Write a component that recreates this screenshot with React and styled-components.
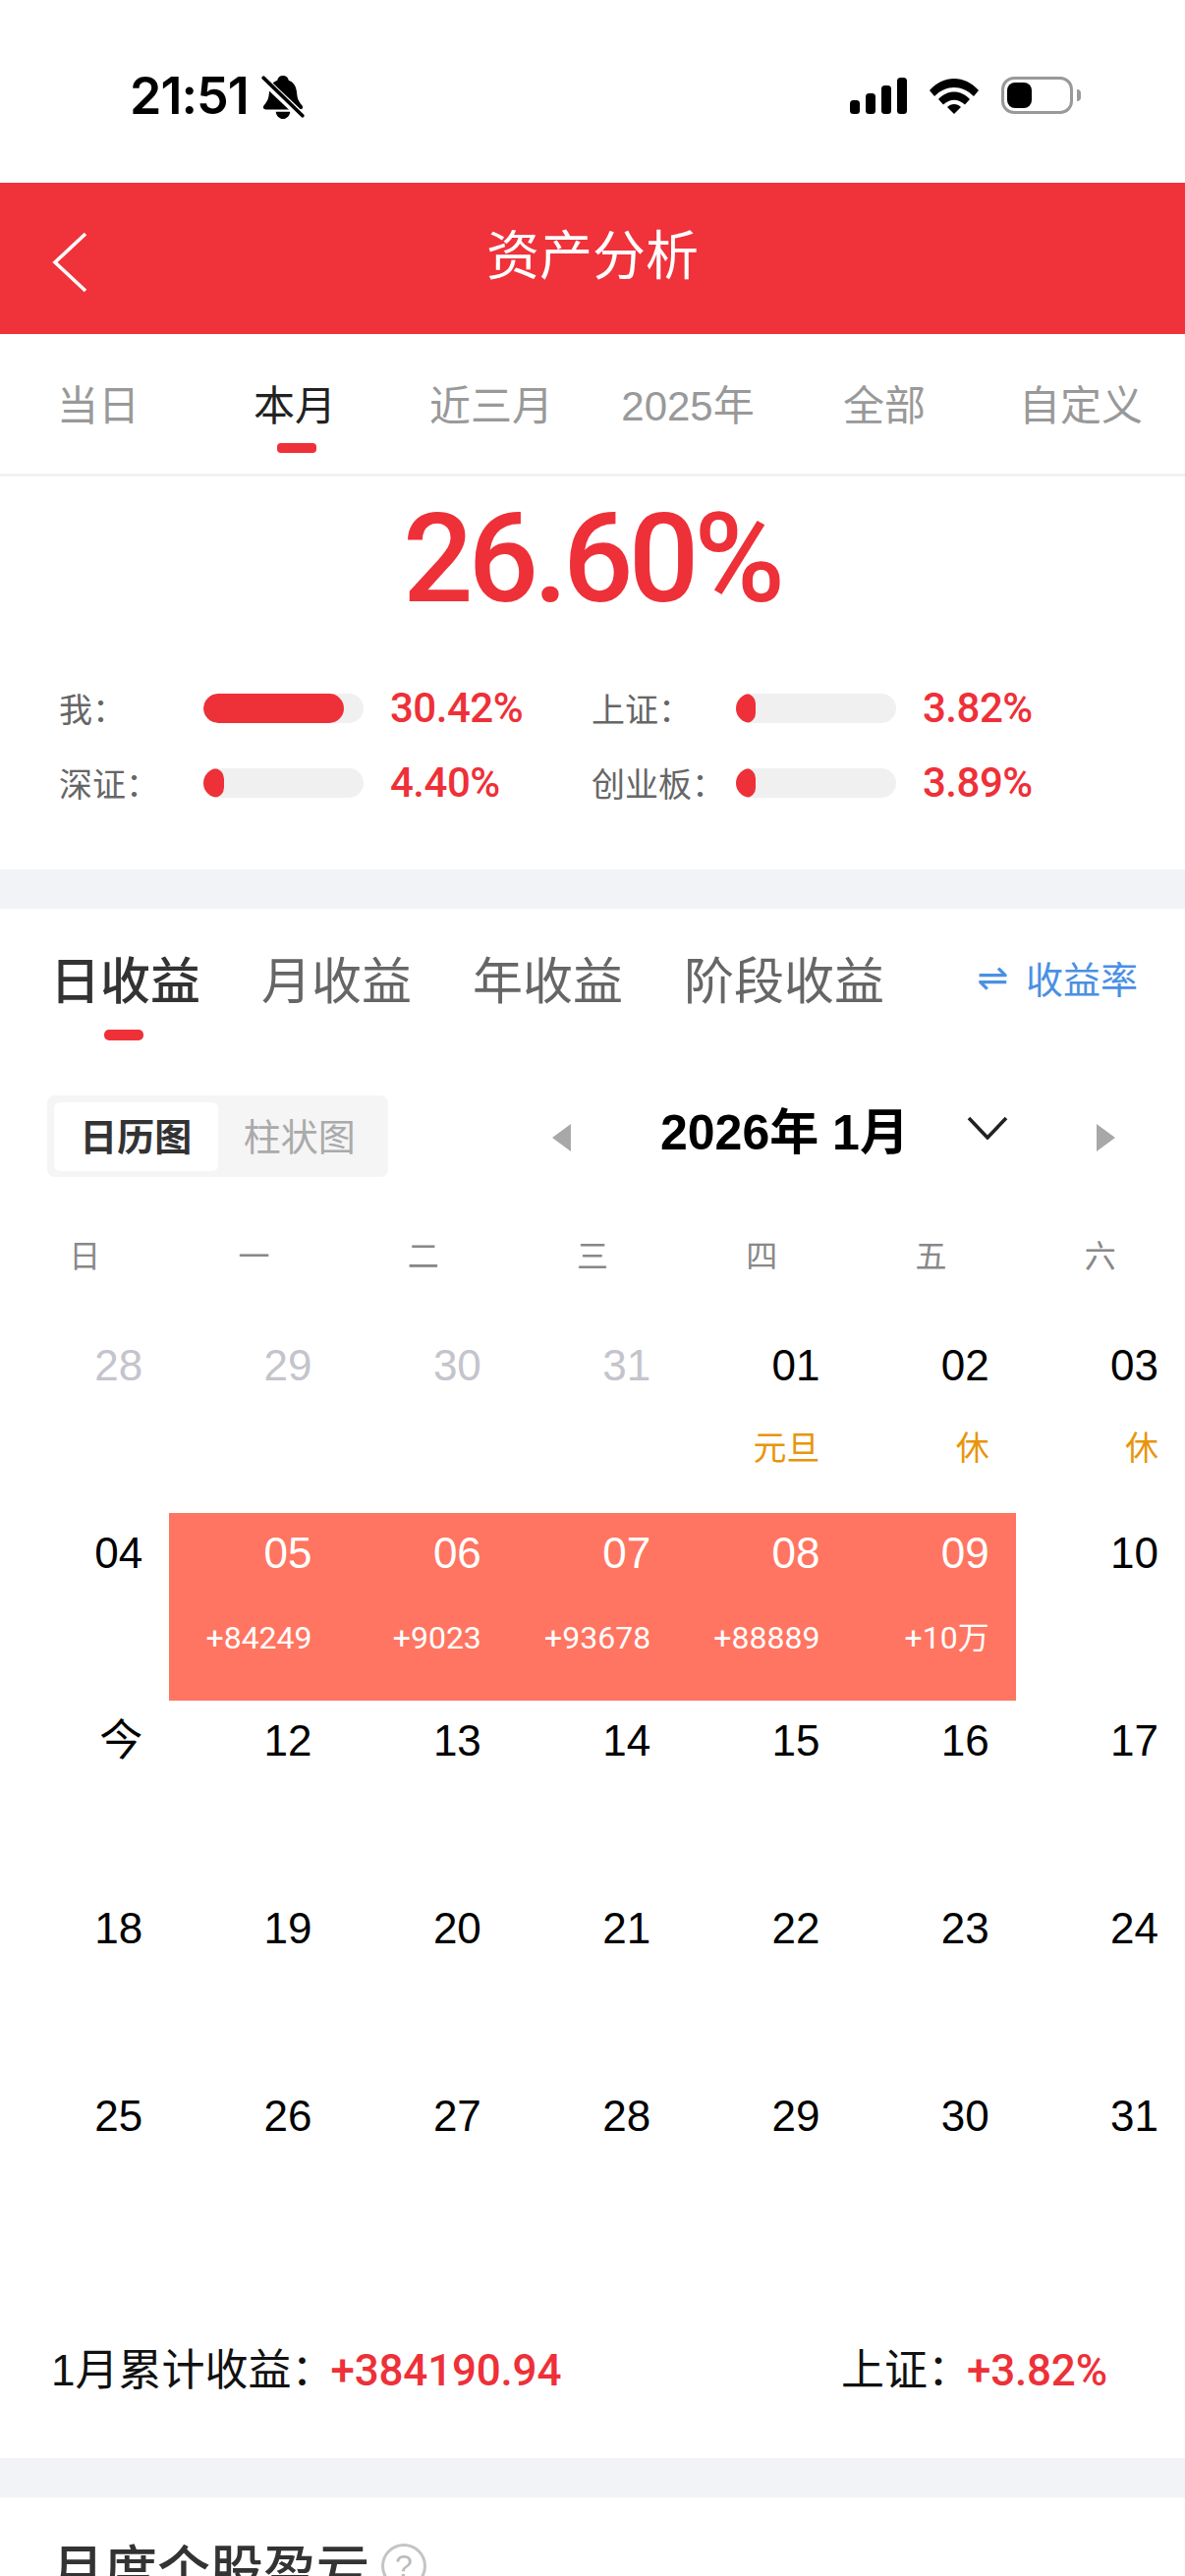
import React from 'react'
import styled, { createGlobalStyle } from 'styled-components'

const GlobalStyle = createGlobalStyle`
  html, body {
    margin: 0;
    padding: 0;
    background: #fff;
  }
  body {
    width: 1206px;
    height: 2622px;
    overflow: hidden;
    font-family: "Liberation Sans", "Noto Sans CJK SC", sans-serif;
  }
  * { box-sizing: border-box; }
`

const RED = '#ee3038'

const topTabs = ['当日', '本月', '近三月', '2025年', '全部', '自定义']
const incomeTabs = ['日收益', '月收益', '年收益', '阶段收益']
const weekdays = ['日', '一', '二', '三', '四', '五', '六']
const stats = [
  { label: '我：', pct: 88, value: '30.42%' },
  { label: '上证：', pct: 12, value: '3.82%' },
  { label: '深证：', pct: 13, value: '4.40%' },
  { label: '创业板：', pct: 12, value: '3.89%' },
]
const days = [
  { n: '28', off: true }, { n: '29', off: true }, { n: '30', off: true }, { n: '31', off: true },
  { n: '01', tag: '元旦' }, { n: '02', tag: '休' }, { n: '03', tag: '休' },
  { n: '04' }, { n: '05', gain: '+84249' }, { n: '06', gain: '+9023' }, { n: '07', gain: '+93678' },
  { n: '08', gain: '+88889' }, { n: '09', gain: '+10万' }, { n: '10' },
  { n: '今' }, { n: '12' }, { n: '13' }, { n: '14' }, { n: '15' }, { n: '16' }, { n: '17' },
  { n: '18' }, { n: '19' }, { n: '20' }, { n: '21' }, { n: '22' }, { n: '23' }, { n: '24' },
  { n: '25' }, { n: '26' }, { n: '27' }, { n: '28' }, { n: '29' }, { n: '30' }, { n: '31' },
]

const App = () => {
  return (
    <Page>
      <GlobalStyle />
      <StatusBar>
        <Clock>21:51</Clock>
        <BellIcon />
        <StatusIcons>
          <SignalIcon />
          <WifiIcon />
          <Battery><BatteryFill /></Battery>
          <BatteryNub />
        </StatusIcons>
      </StatusBar>

      <Header>
        <BackButton>
          <svg width="40" height="62" viewBox="0 0 40 62" fill="none">
            <path d="M35 2 L4 31 L35 60" stroke="#fff" strokeWidth="3.6" />
          </svg>
        </BackButton>
        <HeaderTitle>资产分析</HeaderTitle>
      </Header>

      <TopTabs>
        {topTabs.map((t, i) => (
          <TopTab key={t} $active={i === 1}>{t}</TopTab>
        ))}
      </TopTabs>

      <Summary>
        <BigNumber>26.60%</BigNumber>
        <StatGrid>
          {stats.map((s) => (
            <Stat key={s.label}>
              <StatLabel>{s.label}</StatLabel>
              <Track><Fill $pct={s.pct} /></Track>
              <StatValue>{s.value}</StatValue>
            </Stat>
          ))}
        </StatGrid>
      </Summary>

      <Band />

      <IncomeTabs>
        {incomeTabs.map((t, i) => (
          <IncomeTab key={t} $active={i === 0}>{t}</IncomeTab>
        ))}
        <RateLink><SwapGlyph>⇌</SwapGlyph>收益率</RateLink>
      </IncomeTabs>

      <Toolbar>
        <Segment>
          <SegmentItem $active>日历图</SegmentItem>
          <SegmentItem>柱状图</SegmentItem>
        </Segment>
        <MonthPicker>
          <svg width="21" height="28" viewBox="0 0 21 28"><path d="M20 0 V28 L1 14 Z" fill="#a8a8a8" /></svg>
          <MonthTitle>2026年 1月</MonthTitle>
          <ChevronBox>
            <svg width="42" height="24" viewBox="0 0 42 24" fill="none">
              <path d="M2 2 L21 22 L40 2" stroke="#222" strokeWidth="3.6" />
            </svg>
          </ChevronBox>
          <svg width="21" height="28" viewBox="0 0 21 28"><path d="M1 0 V28 L20 14 Z" fill="#a8a8a8" /></svg>
        </MonthPicker>
      </Toolbar>

      <Weekdays>
        {weekdays.map((d) => <Weekday key={d}>{d}</Weekday>)}
      </Weekdays>

      <Calendar>
        {days.map((d, i) => (
          <DayCell key={i} $hot={!!d.gain}>
            <DayNum $off={d.off} $hot={!!d.gain}>{d.n}</DayNum>
            {d.tag && <DayTag>{d.tag}</DayTag>}
            {d.gain && <DayGain>{d.gain}</DayGain>}
          </DayCell>
        ))}
      </Calendar>

      <Totals>
        <TotalLeft>1月累计收益：<TotalValue>+384190.94</TotalValue></TotalLeft>
        <TotalRight>上证：<TotalValue>+3.82%</TotalValue></TotalRight>
      </Totals>

      <Band />

      <SectionTitle>
        月度个股盈亏
        <HelpIcon>?</HelpIcon>
      </SectionTitle>
    </Page>
  )
}

export default App

const BellIcon = () => (
  <BellWrap>
    <svg width="44" height="46" viewBox="0 0 42 44">
      <path
        d="M21 1c3 0 5 2 5.500 4.500C32 7.500 34 12 34.500 18c.4 5 1.500 8 5 12 1.500 2 .5 4-2 4H4.500c-2.500 0-3.500-2-2-4 3.500-4 4.600-7 5-12C8 12 10 7.500 15.500 5.500 16 3 18 1 21 1z"
        fill="#000"
      />
      <path d="M14 36h14c-.5 4-3.500 7-7 7s-6.500-3-7-7z" fill="#000" />
      <path d="M2 5 L40 41" stroke="#fff" strokeWidth="8" />
      <path d="M2 3 L40 40" stroke="#000" strokeWidth="3.400" strokeLinecap="round" />
    </svg>
  </BellWrap>
)

const SignalIcon = () => (
  <svg width="58" height="37" viewBox="0 0 58 37">
    <rect x="0" y="23" width="10" height="14" rx="3.500" fill="#000" />
    <rect x="16" y="16" width="10" height="21" rx="3.500" fill="#000" />
    <rect x="32" y="8" width="10" height="29" rx="3.500" fill="#000" />
    <rect x="48" y="0" width="10" height="37" rx="3.500" fill="#000" />
  </svg>
)

const WifiIcon = () => (
  <svg width="50" height="37" viewBox="0 0 50 37">
    <path d="M0 13 C14 -3 36 -3 50 13 L45 19 C33 7 17 7 5 19 Z" fill="#000" />
    <path d="M9 22 C18 12 32 12 41 22 L36 27.500 C29 21 21 21 14 27.500 Z" fill="#000" />
    <path d="M18 30 C22 26 28 26 32 30 L25 37 Z" fill="#000" />
  </svg>
)

const Page = styled.div`
  width: 1206px;
  height: 2622px;
  overflow: hidden;
  background: #fff;
`

const StatusBar = styled.div`
  height: 186px;
  padding: 76px 106px 0 132px;
  display: flex;
  align-items: flex-start;
`

const Clock = styled.div`
  font-family: Inter, sans-serif;
  font-weight: 600;
  font-size: 52px;
  line-height: 44px;
  letter-spacing: -1px;
  color: #000;
`

const BellWrap = styled.div`
  margin-left: 13px;
  height: 46px;
`

const StatusIcons = styled.div`
  margin-left: auto;
  margin-top: 2px;
  display: flex;
  align-items: center;
  height: 38px;
  svg + svg { margin-left: 23px; }
`

const Battery = styled.div`
  margin-left: 23px;
  width: 73px;
  height: 38px;
  border: 3px solid #999;
  border-radius: 13px;
  padding: 3px;
`

const BatteryFill = styled.div`
  width: 25px;
  height: 100%;
  background: #000;
  border-radius: 8px;
`

const BatteryNub = styled.div`
  width: 4px;
  height: 12px;
  margin-left: 4px;
  background: #999;
  border-radius: 0 4px 4px 0;
`

const Header = styled.div`
  position: relative;
  height: 154px;
  background: #f0323a;
  display: flex;
  align-items: center;
  justify-content: center;
`

const BackButton = styled.div`
  position: absolute;
  left: 52px;
  top: 50px;
`

const HeaderTitle = styled.div`
  font-family: "Noto Sans CJK SC", sans-serif;
  font-size: 54px;
  line-height: 60px;
  color: #fff;
  margin-top: -13px;
`

const TopTabs = styled.div`
  display: grid;
  grid-template-columns: repeat(6, 200px);
  height: 145px;
  border-bottom: 3px solid #f2f2f2;
`

const TopTab = styled.div`
  position: relative;
  padding-top: 49px;
  text-align: center;
  font-family: "Liberation Sans", "Noto Sans CJK SC", sans-serif;
  font-size: 42px;
  line-height: 50px;
  color: ${(p) => (p.$active ? '#222' : '#999')};
  ${(p) => p.$active && `
    &::after {
      content: '';
      position: absolute;
      left: 82px;
      top: 111px;
      width: 40px;
      height: 10px;
      border-radius: 4px;
      background: ${RED};
    }
  `}
`

const Summary = styled.div`
  height: 400px;
`

const BigNumber = styled.div`
  padding-top: 14px;
  height: 221px;
  text-align: center;
  font-family: Roboto, sans-serif;
  font-weight: 500;
  font-size: 126px;
  line-height: 140px;
  letter-spacing: -5px;
  color: ${RED};
  margin-left: -2px;
`

const StatGrid = styled.div`
  padding-left: 60px;
  display: grid;
  grid-template-columns: 542px 1fr;
  row-gap: 46px;
`

const Stat = styled.div`
  display: flex;
  align-items: center;
  height: 30px;
`

const StatLabel = styled.div`
  width: 147px;
  font-family: "Noto Sans CJK SC", sans-serif;
  font-size: 34px;
  line-height: 40px;
  color: #666;
  white-space: nowrap;
`

const Track = styled.div`
  width: 163px;
  height: 30px;
  border-radius: 15px;
  background: #f0f0f0;
  overflow: hidden;
`

const Fill = styled.div`
  width: ${(p) => p.$pct}%;
  height: 100%;
  border-radius: 15px;
  background: ${RED};
`

const StatValue = styled.div`
  margin-left: 27px;
  font-family: Roboto, sans-serif;
  font-weight: 500;
  font-size: 42px;
  line-height: 40px;
  letter-spacing: -0.500px;
  color: ${RED};
`

const Band = styled.div`
  height: 40px;
  background: #f2f3f7;
`

const IncomeTabs = styled.div`
  height: 190px;
  padding: 40px 48px 0 51px;
  display: flex;
  align-items: flex-start;
  gap: 62px;
`

const IncomeTab = styled.div`
  position: relative;
  font-family: "Noto Sans CJK SC", sans-serif;
  font-size: 51px;
  line-height: 60px;
  font-weight: ${(p) => (p.$active ? 500 : 400)};
  color: ${(p) => (p.$active ? '#333' : '#666')};
  ${(p) => p.$active && `
    &::after {
      content: '';
      position: absolute;
      left: 55px;
      top: 83px;
      width: 40px;
      height: 11px;
      border-radius: 5px;
      background: ${RED};
    }
  `}
`

const RateLink = styled.div`
  margin-left: auto;
  font-family: "Noto Sans CJK SC", sans-serif;
  font-size: 38px;
  line-height: 60px;
  color: #4a90e2;
  display: flex;
  align-items: center;
`

const SwapGlyph = styled.span`
  font-family: "DejaVu Sans", sans-serif;
  font-size: 38px;
  margin-right: 18px;
  margin-left: -3px;
`

const Toolbar = styled.div`
  height: 138px;
  padding-left: 48px;
  display: flex;
  align-items: flex-start;
`

const Segment = styled.div`
  width: 347px;
  height: 83px;
  padding: 7px;
  background: #f5f5f5;
  border-radius: 8px;
  display: flex;
`

const SegmentItem = styled.div`
  width: 167px;
  height: 70px;
  border-radius: 6px;
  background: ${(p) => (p.$active ? '#fff' : 'transparent')};
  font-family: "Noto Sans CJK SC", sans-serif;
  font-size: 38px;
  font-weight: ${(p) => (p.$active ? 700 : 400)};
  line-height: 66px;
  text-align: center;
  color: ${(p) => (p.$active ? '#333' : '#aaa')};
`

const MonthPicker = styled.div`
  margin-left: 166px;
  width: 575px;
  height: 83px;
  display: flex;
  align-items: center;
  padding-top: 2px;
`

const MonthTitle = styled.div`
  margin-left: 90px;
  width: 313px;
  font-family: "Liberation Sans", "Noto Sans CJK SC", sans-serif;
  font-weight: 700;
  font-size: 50px;
  line-height: 60px;
  color: #000;
  margin-top: -10px;
`

const ChevronBox = styled.div`
  width: 131px;
  height: 24px;
  margin-top: -20px;
`

const Weekdays = styled.div`
  display: grid;
  grid-template-columns: repeat(7, 1fr);
  height: 96px;
`

const Weekday = styled.div`
  text-align: center;
  font-family: "Noto Sans CJK SC", sans-serif;
  font-size: 32px;
  line-height: 46px;
  color: #888;
`

const Calendar = styled.div`
  display: grid;
  grid-template-columns: repeat(7, 1fr);
  grid-auto-rows: 191px;
`

const DayCell = styled.div`
  padding: 16px 27px 0 0;
  text-align: right;
  background: ${(p) => (p.$hot ? '#ff7561' : 'transparent')};
`

const DayNum = styled.div`
  font-size: 44px;
  line-height: 50px;
  color: ${(p) => (p.$off ? '#c4c4cc' : p.$hot ? '#fff' : '#000')};
`

const DayTag = styled.div`
  margin-top: 32px;
  font-family: "Noto Sans CJK SC", sans-serif;
  font-size: 34px;
  line-height: 50px;
  color: #e8950c;
`

const DayGain = styled.div`
  margin-top: 41px;
  font-family: Roboto, "Noto Sans CJK SC", sans-serif;
  font-size: 32px;
  line-height: 40px;
  color: #fff;
`

const Totals = styled.div`
  height: 198px;
  padding: 84px 48px 0 52px;
  display: flex;
  font-family: "Liberation Sans", "Noto Sans CJK SC", sans-serif;
  font-size: 44px;
  line-height: 50px;
  color: #111;
`

const TotalLeft = styled.div`
  width: 804px;
`

const TotalRight = styled.div``

const TotalValue = styled.span`
  font-family: Roboto, sans-serif;
  font-weight: 500;
  font-size: 44px;
  letter-spacing: -0.200px;
  color: ${RED};
  margin-left: -4px;
`

const SectionTitle = styled.div`
  padding: 36px 0 0 52px;
  display: flex;
  align-items: flex-start;
  font-family: "Noto Sans CJK SC", sans-serif;
  font-weight: 500;
  font-size: 54px;
  line-height: 70px;
  color: #333;
`

const HelpIcon = styled.span`
  margin: 11px 0 0 12px;
  width: 46px;
  height: 46px;
  border: 3px solid #c4c4c4;
  border-radius: 50%;
  font-family: "Liberation Sans", sans-serif;
  font-weight: 400;
  font-size: 32px;
  line-height: 40px;
  text-align: center;
  color: #bbb;
`
